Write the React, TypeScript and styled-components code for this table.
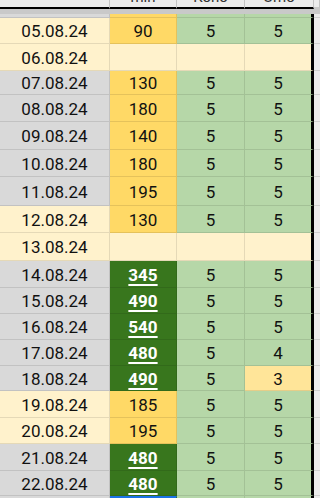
import styled, { createGlobalStyle, css } from "styled-components"

type Fill = "cream" | "grey" | "yellow" | "dark" | "green" | "pale"

interface Entry {
    date: string;
    h: number;
    weekend?: boolean;
    min?: number;
    kono?: number;
    umo?: number;
}

const fills: Record<Fill, string> = {
    cream: "#fff2cc",
    grey: "#d9d9d9",
    yellow: "#ffd966",
    dark: "#38761d",
    green: "#b6d7a8",
    pale: "#ffe599",
}

const entries: Entry[] = [
    { date: "05.08.24", h: 26, weekend: true, min: 90, kono: 5, umo: 5 },
    { date: "06.08.24", h: 27, weekend: true },
    { date: "07.08.24", h: 24, min: 130, kono: 5, umo: 5 },
    { date: "08.08.24", h: 27, min: 180, kono: 5, umo: 5 },
    { date: "09.08.24", h: 28, min: 140, kono: 5, umo: 5 },
    { date: "10.08.24", h: 27, min: 180, kono: 5, umo: 5 },
    { date: "11.08.24", h: 29, min: 195, kono: 5, umo: 5 },
    { date: "12.08.24", h: 27, weekend: true, min: 130, kono: 5, umo: 5 },
    { date: "13.08.24", h: 28, weekend: true },
    { date: "14.08.24", h: 27, min: 345, kono: 5, umo: 5 },
    { date: "15.08.24", h: 26, min: 490, kono: 5, umo: 5 },
    { date: "16.08.24", h: 26, min: 540, kono: 5, umo: 5 },
    { date: "17.08.24", h: 26, min: 480, kono: 5, umo: 4 },
    { date: "18.08.24", h: 25, min: 490, kono: 5, umo: 3 },
    { date: "19.08.24", h: 27, weekend: true, min: 185, kono: 5, umo: 5 },
    { date: "20.08.24", h: 26, weekend: true, min: 195, kono: 5, umo: 5 },
    { date: "21.08.24", h: 27, min: 480, kono: 5, umo: 5 },
    { date: "22.08.24", h: 25, min: 480, kono: 5, umo: 5 },
]

const columns = "110px 67px 68px 69px 1fr"

const GlobalStyle = createGlobalStyle`
    * { box-sizing: border-box; }
    html, body {
        margin: 0;
        padding: 0;
        overflow: hidden;
        background: #ececec;
    }
    body {
        font-family: Roboto, "Liberation Sans", Arial, sans-serif;
    }
`

const Sheet = styled.div`
    width: 320px;
    height: 498px;
    overflow: hidden;
    display: flex;
    flex-direction: column;
    background: #ececec;
`

const HeaderRow = styled.div`
    display: grid;
    grid-template-columns: ${columns};
    height: 9px;
    flex: none;
`

const HeaderCell = styled.div<{ $outside?: boolean }>`
    height: 9px;
    overflow: hidden;
    display: flex;
    align-items: flex-end;
    justify-content: center;
    padding-bottom: 3px;
    background: #ececec;
    border-right: 1px solid #c4c4c4;
    border-bottom: 2px solid ${({ $outside }) => ($outside ? "#c9c9c9" : "#000")};
    color: #333;
    font-size: 15px;
    line-height: 14px;
`

const FreezeBar = styled.div`
    height: 5px;
    flex: none;
    background: #c9c9c9;
`

const Row = styled.div<{ $h: number }>`
    display: grid;
    grid-template-columns: ${columns};
    height: ${({ $h }) => $h}px;
    flex: none;
`

const Cell = styled.div<{ $fill: Fill; $edge?: boolean; $selected?: boolean }>`
    display: flex;
    align-items: center;
    justify-content: center;
    padding-top: 1px;
    overflow: hidden;
    background: ${({ $fill }) => fills[$fill]};
    border-bottom: 1px solid rgba(0, 0, 0, 0.1);
    border-right: ${({ $edge }) => ($edge ? "3px solid #000" : "1px solid rgba(0, 0, 0, 0.1)")};
    color: #111;
    font-size: 17px;
    white-space: nowrap;

    ${({ $fill }) =>
        $fill === "dark" &&
        css`
            color: #fff;
            font-weight: 700;
            text-decoration: underline;
            text-decoration-thickness: 1.5px;
            text-underline-offset: 3px;
        `}

    ${({ $selected }) =>
        $selected &&
        css`
            border-top: 2px solid #1a73e8;
        `}
`

const Spare = styled.div`
    background: #ececec;
    border-bottom: 1px solid #d0d0d0;
`

const minFill = (e: Entry): Fill => {
    if (e.min === undefined) return "cream"
    return e.min >= 300 ? "dark" : "yellow"
}

const scoreFill = (v?: number): Fill => {
    if (v === undefined) return "cream"
    return v <= 3 ? "pale" : "green"
}

const App = (): JSX.Element => {
    return (
        <>
            <GlobalStyle />
            <Sheet>
                <HeaderRow>
                    <HeaderCell />
                    <HeaderCell>min</HeaderCell>
                    <HeaderCell>Kono</HeaderCell>
                    <HeaderCell>Umo</HeaderCell>
                    <HeaderCell $outside />
                </HeaderRow>
                <FreezeBar />

                <Row $h={4}>
                    <Cell $fill="grey" />
                    <Cell $fill="yellow" />
                    <Cell $fill="green" />
                    <Cell $fill="green" $edge />
                    <Spare />
                </Row>

                {entries.map((e) => (
                    <Row key={e.date} $h={e.h}>
                        <Cell $fill={e.weekend ? "cream" : "grey"}>{e.date}</Cell>
                        <Cell $fill={minFill(e)}>{e.min}</Cell>
                        <Cell $fill={scoreFill(e.kono)}>{e.kono}</Cell>
                        <Cell $fill={scoreFill(e.umo)} $edge>{e.umo}</Cell>
                        <Spare />
                    </Row>
                ))}

                <Row $h={26}>
                    <Cell $fill="grey" />
                    <Cell $fill="dark" $selected />
                    <Cell $fill="green" />
                    <Cell $fill="green" $edge />
                    <Spare />
                </Row>
            </Sheet>
        </>
    )
}

export default App
